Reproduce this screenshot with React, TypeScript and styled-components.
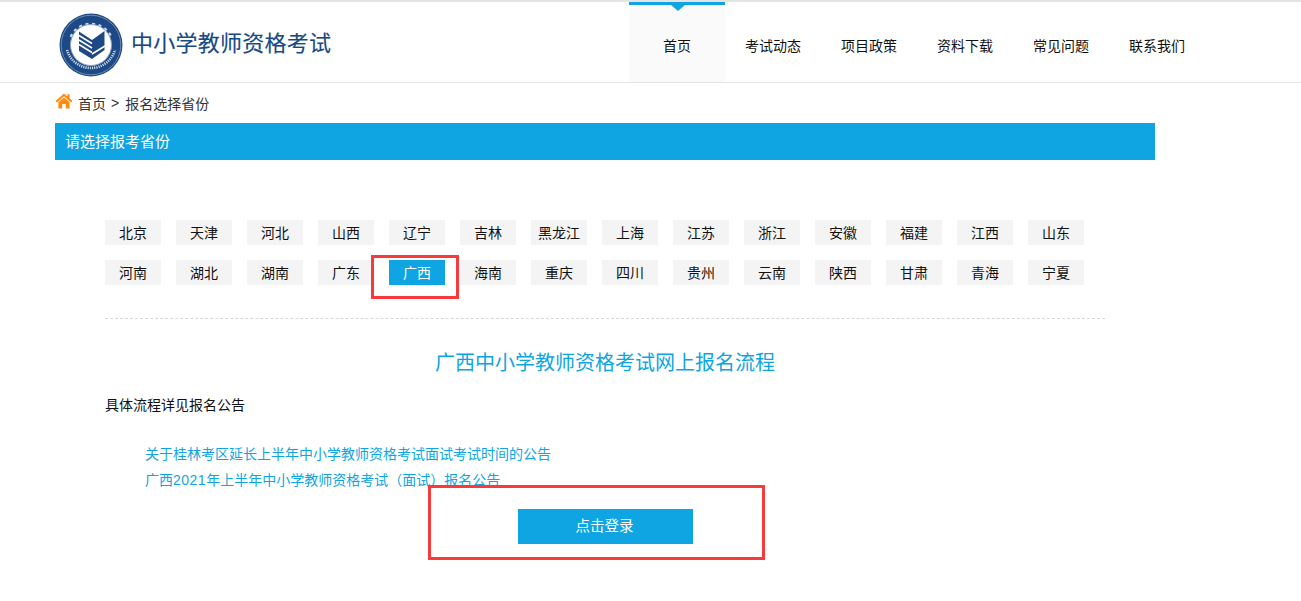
import styled, { createGlobalStyle } from 'styled-components';

const blue = '#0ea5e2';

const row1 = ['北京', '天津', '河北', '山西', '辽宁', '吉林', '黑龙江', '上海', '江苏', '浙江', '安徽', '福建', '江西', '山东'];
const row2 = ['河南', '湖北', '湖南', '广东', '广西', '海南', '重庆', '四川', '贵州', '云南', '陕西', '甘肃', '青海', '宁夏'];
const navItems = ['首页', '考试动态', '项目政策', '资料下载', '常见问题', '联系我们'];

const GlobalStyle = createGlobalStyle`
  html, body {
    margin: 0;
    padding: 0;
    background: #fff;
    font-family: 'Liberation Sans', 'Noto Sans CJK SC', sans-serif;
    font-size: 14px;
    color: #222;
    overflow: hidden;
  }
`;

const Page = styled.div`
  position: relative;
  width: 1301px;
  height: 601px;
  overflow: hidden;
`;

const Header = styled.header`
  display: flex;
  justify-content: space-between;
  height: 80px;
  border-top: 2px solid #e4e4e4;
  border-bottom: 1px solid #e4e4e4;
  padding-left: 59px;
`;

const Brand = styled.div`
  display: flex;
  align-items: center;
  gap: 8px;
  padding-top: 5px;
`;

const BrandName = styled.span`
  font-size: 22px;
  line-height: 30px;
  letter-spacing: 0.25px;
  color: #174a85;
  -webkit-text-stroke: 0.15px #174a85;
  white-space: nowrap;
  margin-top: -2px;
`;

const Nav = styled.nav`
  display: flex;
  margin-right: 96px;
`;

const NavItem = styled.a<{ $active?: boolean }>`
  position: relative;
  display: flex;
  align-items: center;
  justify-content: center;
  width: 96px;
  height: 80px;
  box-sizing: border-box;
  padding-top: 2px;
  font-size: 14px;
  color: #111;
  background: ${p => (p.$active ? '#fafafa' : 'transparent')};
  border-top: 3px solid ${p => (p.$active ? blue : 'transparent')};

  ${p =>
    p.$active &&
    `&::after {
      content: '';
      position: absolute;
      top: 0;
      left: 42px;
      border-style: solid;
      border-width: 6px 7px 0;
      border-color: ${blue} transparent transparent;
    }`}
`;

const Main = styled.main`
  width: 1100px;
  margin-left: 55px;
`;

const Crumbs = styled.div`
  display: flex;
  align-items: center;
  height: 40px;
  font-size: 14px;
  color: #333;
`;

const CrumbSep = styled.span`
  margin: 0 6px 0 5px;
`;

const HomeIcon = styled.svg`
  width: 18px;
  height: 16px;
  margin: -4px 5px 0 0;
`;

const TitleBar = styled.div`
  height: 37px;
  line-height: 37px;
  padding-left: 10px;
  background: ${blue};
  color: #fff;
  font-size: 15px;
`;

const Provinces = styled.div`
  display: flex;
  flex-direction: column;
  gap: 15px;
  margin: 60px 50px 0;
  padding-bottom: 33px;
  border-bottom: 1px dashed #d8d8d8;
`;

const ProvinceRow = styled.div`
  display: flex;
  gap: 15px;
`;

const Province = styled.a<{ $active?: boolean }>`
  width: 56px;
  height: 25px;
  line-height: 26px;
  text-align: center;
  white-space: nowrap;
  font-size: 14px;
  background: ${p => (p.$active ? blue : '#f4f4f4')};
  color: ${p => (p.$active ? '#fff' : '#111')};
`;

const FlowTitle = styled.h2`
  margin: 30px 0 0;
  width: 1100px;
  text-align: center;
  font-size: 20px;
  line-height: 28px;
  font-weight: 400;
  color: ${blue};
`;

const Note = styled.p`
  margin: 18px 0 0 50px;
  font-size: 14px;
  line-height: 20px;
  color: #111;
`;

const Notices = styled.div`
  display: flex;
  flex-direction: column;
  margin: 26px 0 0 90px;
`;

const Notice = styled.a`
  font-size: 14px;
  line-height: 26px;
  color: ${blue};
`;

const Year = styled.span`
  letter-spacing: 0.5px;
`;

const LoginButton = styled.button`
  display: block;
  width: 175px;
  height: 35px;
  margin: 16px 0 0 463px;
  padding: 0 2px 4px 0;
  border: 0;
  background: ${blue};
  color: #fff;
  font: inherit;
  font-size: 14.5px;
`;

const Mark = styled.div<{ $x: number; $y: number; $w: number; $h: number }>`
  position: absolute;
  left: ${p => p.$x}px;
  top: ${p => p.$y}px;
  width: ${p => p.$w}px;
  height: ${p => p.$h}px;
  box-sizing: border-box;
  border: 3px solid #f93a3a;
  pointer-events: none;
`;

function Logo() {
  return (
    <svg width="64" height="64" viewBox="0 0 64 64">
      <circle cx="32" cy="32" r="31.5" fill="#1d4a86" />
      <circle cx="32" cy="32" r="29.8" fill="none" stroke="#9fb4cf" strokeWidth="0.6" />
      {/* ring lettering, too blurred to read in the reference */}
      <path d="M12 24 A22 22 0 0 1 52 24" fill="none" stroke="#c9d6e6" strokeWidth="3" strokeDasharray="3 3.5" />
      <path d="M8 37 A25 25 0 0 0 56 37" fill="none" stroke="#c9d6e6" strokeWidth="2.6" strokeDasharray="1.2 1" />
      <circle cx="32" cy="32" r="20.5" fill="#fff" stroke="#8ea6c4" strokeWidth="1" />
      <path d="M20 18.5 L33 27 V46 L20 38 Z" fill="#1d4a86" />
      <path d="M33 27 L45.5 18 V37 L33 46 Z" fill="#1d4a86" />
      <path d="M20 22.5 L33 30.5 M20 27 L33 35 M20 31.5 L33 39.5 M33 41 L46 33" stroke="#fff" strokeWidth="1.5" fill="none" />
    </svg>
  );
}

export default function App() {
  return (
    <Page>
      <GlobalStyle />
      <Header>
        <Brand>
          <Logo />
          <BrandName>中小学教师资格考试</BrandName>
        </Brand>
        <Nav>
          {navItems.map((item, i) => (
            <NavItem key={item} $active={i === 0}>
              {item}
            </NavItem>
          ))}
        </Nav>
      </Header>
      <Main>
        <Crumbs>
          <HomeIcon viewBox="0 0 18 16">
            <path d="M9 0.5 L0.5 8 L2 9.4 L9 3.3 L16 9.4 L17.5 8 L14.5 5.3 V1.2 H12.3 V3.4 Z" fill="#ff8a0c" />
            <path d="M3.4 9.2 L9 4.6 L14.6 9.2 V15.5 H10.8 V11 H7.2 V15.5 H3.4 Z" fill="#ff8a0c" />
          </HomeIcon>
          首页
          <CrumbSep>&gt;</CrumbSep>
          报名选择省份
        </Crumbs>
        <TitleBar>请选择报考省份</TitleBar>
        <Provinces>
          {[row1, row2].map(row => (
            <ProvinceRow key={row[0]}>
              {row.map(name => (
                <Province key={name} $active={name === '广西'}>
                  {name}
                </Province>
              ))}
            </ProvinceRow>
          ))}
        </Provinces>
        <FlowTitle>广西中小学教师资格考试网上报名流程</FlowTitle>
        <Note>具体流程详见报名公告</Note>
        <Notices>
          <Notice>关于桂林考区延长上半年中小学教师资格考试面试考试时间的公告</Notice>
          <Notice>
            广西<Year>2021</Year>年上半年中小学教师资格考试（面试）报名公告
          </Notice>
        </Notices>
        <LoginButton>点击登录</LoginButton>
      </Main>
      <Mark $x={371} $y={255} $w={88} $h={44} />
      <Mark $x={428} $y={485} $w={337} $h={75} />
    </Page>
  );
}
